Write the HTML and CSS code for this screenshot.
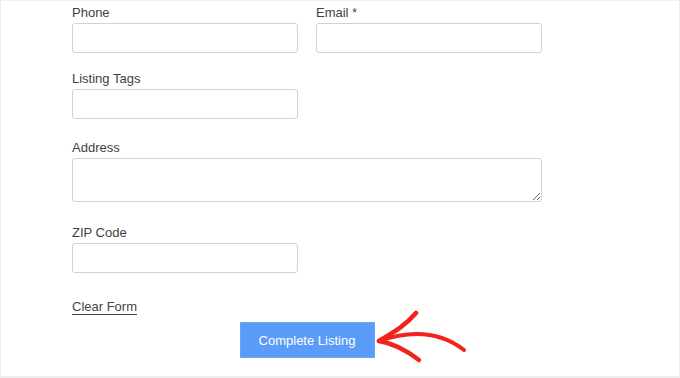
FILE: index.html
```html
<!DOCTYPE html>
<html lang="en">
<head>
<meta charset="utf-8">
<title>Listing Form</title>
<link rel="stylesheet" href="styles.css">
</head>
<body>
<div class="frame">
  <form class="form">
    <div class="row row-first">
      <div class="field">
        <label class="label">Phone</label>
        <input class="input" type="text">
      </div>
      <div class="field">
        <label class="label">Email <span class="req">*</span></label>
        <input class="input" type="text">
      </div>
    </div>
    <div class="row row-tags">
      <div class="field">
        <label class="label">Listing Tags</label>
        <input class="input" type="text">
      </div>
    </div>
    <div class="row row-address">
      <div class="field field-wide">
        <label class="label">Address</label>
        <textarea class="textarea"></textarea>
      </div>
    </div>
    <div class="row row-zip">
      <div class="field">
        <label class="label">ZIP Code</label>
        <input class="input" type="text">
      </div>
    </div>
    <div class="clear-wrap"><a class="clear" href="#">Clear Form</a></div>
    <div class="submit-wrap">
      <button class="submit" type="button">Complete Listing</button>
      <svg class="arrow" width="100" height="60" viewBox="0 0 100 60" aria-hidden="true">
        <path d="M4 31 C 15 24, 28 18, 41 3" fill="none" stroke="#f2231c" stroke-width="4.5" stroke-linecap="round"/>
        <path d="M4 31 C 17 33, 31 40, 44 50" fill="none" stroke="#f2231c" stroke-width="4.5" stroke-linecap="round"/>
        <path d="M4 31 C 30 22, 62 19, 89 40" fill="none" stroke="#f2231c" stroke-width="4" stroke-linecap="round"/>
      </svg>
    </div>
  </form>
</div>
</body>
</html>
```
FILE: styles.css
```css
* { box-sizing: border-box; }
html, body { margin: 0; padding: 0; background: #fff; }
.frame {
  width: 680px;
  height: 378px;
  border: 1px solid #efefef;
  border-bottom-width: 2px;
  overflow: hidden;
}
.form {
  width: 470px;
  margin-left: 71px;
  padding-top: 3px;
  font-family: "Liberation Sans", Arial, sans-serif;
}
.row { display: flex; gap: 18px; }
.row-tags { margin-top: 17px; }
.row-address { margin-top: 20px; }
.row-zip { margin-top: 22px; }
.field { display: flex; flex-direction: column; width: 226px; }
.field-wide { width: 470px; }
.label {
  font-size: 13px;
  line-height: 18px;
  color: #3f3f3f;
  margin-bottom: 1px;
}
.req { color: #3f3f3f; font-size: 12px; }
.input {
  height: 30px;
  border: 1px solid #d2d2d2;
  border-radius: 3px;
  background: #fff;
  margin: 0;
  padding: 0 8px;
}
.textarea {
  height: 44px;
  border: 1px solid #d2d2d2;
  border-radius: 3px;
  background: #fff;
  margin: 0;
  padding: 6px 8px;
  resize: vertical;
}
.clear-wrap { margin-top: 25px; line-height: 16px; }
.clear {
  font-size: 13px;
  color: #444;
  text-decoration: underline;
  text-underline-offset: 3px;
}
.submit-wrap {
  position: relative;
  display: flex;
  justify-content: center;
  margin-top: 7px;
}
.submit {
  width: 135px;
  height: 36px;
  background: #5a9cf7;
  border: 1px solid #6aa7f8;
  border-radius: 0;
  color: #fff;
  font-family: "Liberation Sans", Arial, sans-serif;
  font-size: 13px;
  padding: 0;
}
.arrow {
  position: absolute;
  left: 303px;
  top: -12px;
}
```
